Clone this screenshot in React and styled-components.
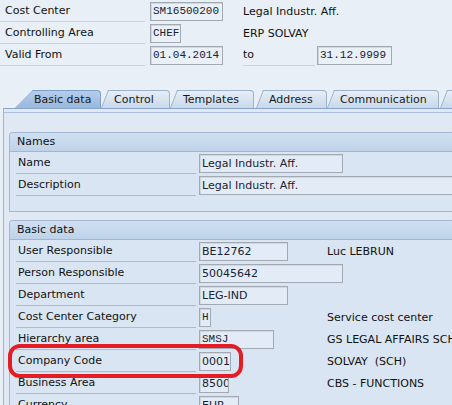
import React from 'react'
import styled, { createGlobalStyle } from 'styled-components'

const GlobalStyle = createGlobalStyle`
  html, body {
    margin: 0;
    padding: 0;
    overflow: hidden;
    background: #e9eff6;
  }
  body {
    font-family: "DejaVu Sans", Tahoma, sans-serif;
    font-size: 11px;
    color: #111;
  }
`

const Screen = styled.div`
  position: relative;
  width: 452px;
  height: 405px;
  overflow: hidden;
  background: #e9eff6;
`

const HeaderRow = styled.div`
  display: flex;
  align-items: center;
  height: 22px;
`

const HeaderLabel = styled.div`
  box-sizing: border-box;
  width: ${p => p.$w || 145}px;
  height: 22px;
  line-height: 21px;
  padding-left: ${p => p.$pad ?? 5}px;
  border-bottom: 1px solid #c9d1db;
  white-space: nowrap;
`

const Slot = styled.div`
  box-sizing: border-box;
  width: 98px;
  padding-left: 5px;
`

const Field = styled.div`
  box-sizing: border-box;
  width: ${p => p.$w}px;
  height: 19px;
  margin-left: ${p => p.$ml || 0}px;
  padding-left: 2px;
  border: 1px solid #a2a9b2;
  background: ${p => p.$light ? '#e9f0f8' : '#e3ecf6'};
  box-shadow: inset 1px 1px 0 #cfd7e1;
  color: #1a2233;
  font-family: ${p => p.$mono ? '"Liberation Mono", "DejaVu Sans Mono", monospace' : '"DejaVu Sans", sans-serif'};
  font-size: 11px;
  line-height: 17px;
  white-space: nowrap;
  overflow: hidden;
  grid-column: ${p => p.$span ? 'span 2' : 'auto'};
`

const Desc = styled.div`
  padding-left: ${p => p.$pad || 0}px;
  white-space: pre;
`

const TabStrip = styled.div`
  display: flex;
  align-items: flex-end;
  margin-top: 24px;
  height: 18px;
  padding-left: 33px;
`

const Tab = styled.div`
  position: relative;
  z-index: ${p => p.$active ? 2 : 1};
  flex: none;
  box-sizing: border-box;
  width: ${p => p.$w}px;
  height: 18px;
  margin-left: ${p => p.$ml || 0}px;
  padding-left: ${p => p.$active ? 1 : 6}px;
  line-height: 17px;
  border: 1px solid ${p => p.$active ? '#7f9fc6' : '#9bb2cd'};
  border-left: none;
  border-bottom: none;
  border-top-right-radius: 4px;
  background: ${p => p.$active
    ? 'linear-gradient(#b5cdea, #98b8de)'
    : 'linear-gradient(#e6edf6, #c9d9eb)'};
  color: #1a1a1a;
  white-space: nowrap;

  &::before {
    content: '';
    position: absolute;
    z-index: -1;
    top: -1px;
    bottom: 0;
    left: -${p => p.$slant}px;
    width: ${p => p.$slant + 6}px;
    background: inherit;
    border-left: 1px solid ${p => p.$active ? '#7f9fc6' : '#9bb2cd'};
    border-top: 1px solid ${p => p.$active ? '#7f9fc6' : '#9bb2cd'};
    transform-origin: bottom left;
    transform: skewX(-${p => Math.atan(p.$slant / 18) * 180 / Math.PI}deg);
  }
`

const Panel = styled.div`
  margin-left: 3px;
  width: 560px;
  min-height: 320px;
  padding-top: 23px;
  border-top: 1px solid #86a5c8;
  border-left: 1px solid #9fb5cf;
  background: #dfe8f3;
  box-shadow: inset 0 3px 0 #dfe8f3, inset 0 4px 0 #abc0d8;
`

const Group = styled.section`
  margin: 0 0 8px 5px;
  padding-bottom: 15px;
  border: 1px solid #a1b7d1;
  border-right: none;
  border-top-left-radius: 4px;
  background: #d9e5f2;
`

const GroupTitle = styled.div`
  height: 18px;
  line-height: 18px;
  padding-left: 7px;
  border-bottom: 1px solid #a1b7d1;
  border-top-left-radius: 3px;
  background: linear-gradient(#d0e0f0, #bed2e9);
`

const Row = styled.div`
  display: grid;
  grid-template-columns: 183px 128px auto;
  align-items: center;
  height: 22px;
  padding-left: 6px;
`

const RowLabel = styled.div`
  box-sizing: border-box;
  height: 22px;
  line-height: 21px;
  margin-right: 3px;
  padding-left: 2px;
  border-bottom: 1px solid #adbdcf;
  white-space: nowrap;
`

const Marker = styled.div`
  position: absolute;
  left: 8px;
  top: 344px;
  width: 235px;
  height: 34px;
  box-sizing: border-box;
  border: 4px solid #e41c24;
  border-radius: 12px;
  pointer-events: none;
`

const tabs = [
  { label: 'Basic data', w: 68, ml: 0, slant: 18, active: true },
  { label: 'Control', w: 62, ml: 7, slant: 7 },
  { label: 'Templates', w: 77, ml: 7, slant: 7 },
  { label: 'Address', w: 64, ml: 9, slant: 7 },
  { label: 'Communication', w: 105, ml: 7, slant: 7 },
  { label: '', w: 60, ml: 8, slant: 7 },
]

const basicRows = [
  { label: 'User Responsible', value: 'BE12762', w: 89, desc: 'Luc LEBRUN' },
  { label: 'Person Responsible', value: '50045642', w: 144, span: true },
  { label: 'Department', value: 'LEG-IND', w: 89 },
  { label: 'Cost Center Category', value: 'H', w: 12, mono: true, desc: 'Service cost center' },
  { label: 'Hierarchy area', value: 'SMSJ', w: 75, mono: true, desc: 'GS LEGAL AFFAIRS SCH' },
  { label: 'Company Code', value: '0001', w: 32, desc: 'SOLVAY  (SCH)' },
  { label: 'Business Area', value: '8500', w: 30, desc: 'CBS - FUNCTIONS' },
  { label: 'Currency', value: 'EUR', w: 40 },
]

const App = () => {
  return (
    <Screen>
      <GlobalStyle />

      <HeaderRow>
        <HeaderLabel>Cost Center</HeaderLabel>
        <Slot><Field $w={73} $mono $light>SM16500200</Field></Slot>
        <Desc>Legal Industr. Aff.</Desc>
      </HeaderRow>
      <HeaderRow>
        <HeaderLabel>Controlling Area</HeaderLabel>
        <Slot><Field $w={31} $mono $light>CHEF</Field></Slot>
        <Desc>ERP SOLVAY</Desc>
      </HeaderRow>
      <HeaderRow>
        <HeaderLabel>Valid From</HeaderLabel>
        <Slot><Field $w={73} $mono $light>01.04.2014</Field></Slot>
        <HeaderLabel $w={72} $pad={0}>to</HeaderLabel>
        <Field $w={75} $ml={2} $mono $light>31.12.9999</Field>
      </HeaderRow>

      <TabStrip>
        {tabs.map((t, i) => (
          <Tab key={i} $w={t.w} $ml={t.ml} $slant={t.slant} $active={t.active}>{t.label}</Tab>
        ))}
      </TabStrip>

      <Panel>
        <Group>
          <GroupTitle>Names</GroupTitle>
          <Row>
            <RowLabel>Name</RowLabel>
            <Field $w={144} $span>Legal Industr. Aff.</Field>
          </Row>
          <Row>
            <RowLabel>Description</RowLabel>
            <Field $w={300} $span>Legal Industr. Aff.</Field>
          </Row>
        </Group>

        <Group>
          <GroupTitle>Basic data</GroupTitle>
          {basicRows.map(r => (
            <Row key={r.label}>
              <RowLabel>{r.label}</RowLabel>
              <Field $w={r.w} $mono={r.mono} $span={r.span}>{r.value}</Field>
              {r.desc && <Desc>{r.desc}</Desc>}
            </Row>
          ))}
        </Group>
      </Panel>

      <Marker />
    </Screen>
  )
}

export default App
